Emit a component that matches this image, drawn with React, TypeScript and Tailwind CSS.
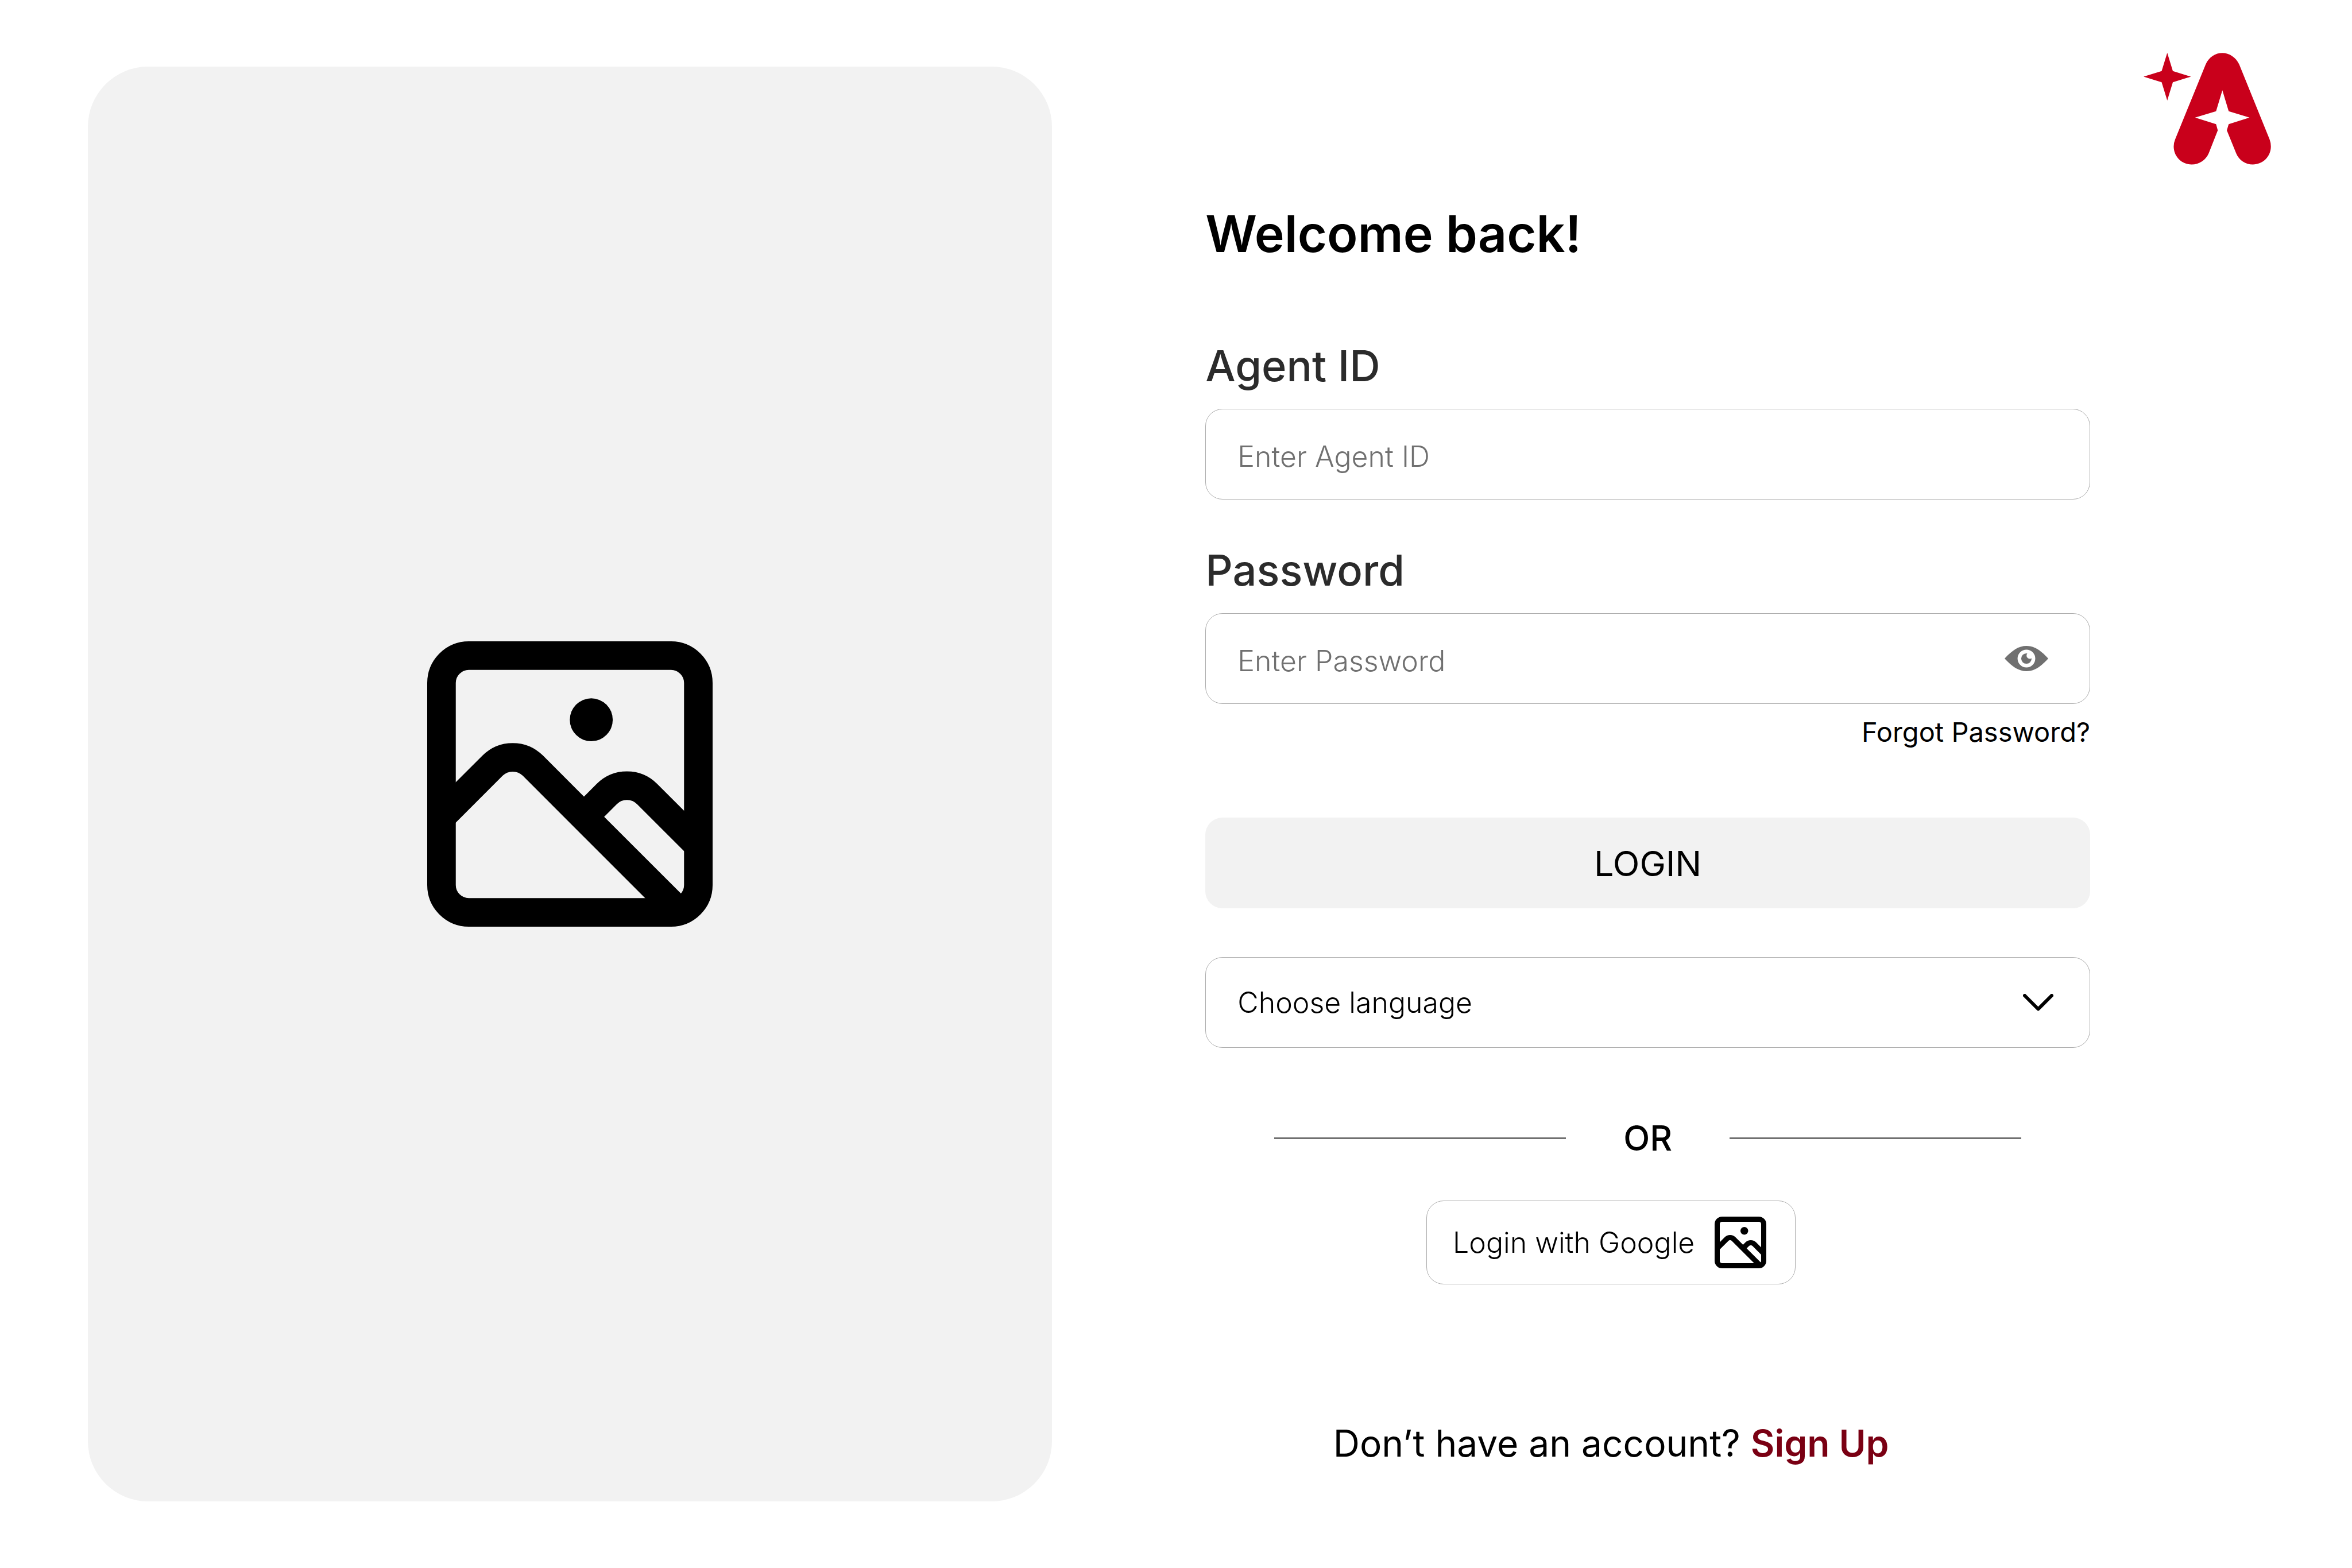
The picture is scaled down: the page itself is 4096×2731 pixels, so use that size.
import { useState } from "react";

function PictureIcon({ className }: { className: string }) {
  return (
    <svg className={className} viewBox="88 88 1389 1389" fill="none" stroke="currentColor" strokeWidth={139} aria-hidden="true">
      <rect x="157.5" y="157.5" width="1250" height="1250" rx="133" />
      <circle cx="886.5" cy="470" r="104.5" fill="currentColor" stroke="none" />
      <path d="M157 942 L406 693 A139 139 0 0 1 602 693 L1325 1416" />
      <path d="M862 931 L962 831 A139 139 0 0 1 1158 831 L1400 1073" />
    </svg>
  );
}

function Logo({ className }: { className: string }) {
  return (
    <svg className={className} viewBox="112 100 888 780" fill="#c9001b" role="img" aria-label="Logo">
      <path d="M277 100 L316 227 L442 266 L316 305 L277 432 L238 305 L112 266 L238 227 Z" />
      <path d="M545 180 C567 130 612 101 661 101 C710 101 755 132 778 180 L990 703 Q999 727 999 752 C999 823 942 878 873 878 C822 878 776 848 757 800 L692 640 L705 597 L850 551 L705 507 L661 361 L617 507 L471 551 L617 597 L629 640 L566 800 C546 848 498 878 447 878 C378 878 322 823 322 752 Q322 727 332 703 Z" />
    </svg>
  );
}

function EyeIcon() {
  return (
    <svg className="h-11 w-[76px]" viewBox="0 0 102 59" aria-hidden="true">
      <path fill="#707070" d="M0 29.5 C18 10 33 0 51 0 S84 10 102 29.5 C84 49 69 59 51 59 S18 49 0 29.5 Z" />
      <circle cx="51" cy="29.5" r="20.7" fill="#fff" />
      <circle cx="51" cy="29.5" r="12.2" fill="#707070" />
      <circle cx="59" cy="22.5" r="7.7" fill="#fff" />
    </svg>
  );
}

const field =
  "h-[158px] w-full rounded-[30px] border border-[#acacac] bg-white px-[55px] text-[50px] font-light outline-none";
const label = "mb-[30px] block text-[74px] leading-[90px] font-medium text-[#2b2b2b]";

export default function App() {
  const [shown, setShown] = useState(false);

  return (
    <main className="flex min-h-screen items-stretch bg-white font-['Inter','Liberation_Sans',sans-serif] text-black">
      <aside className="my-[116px] ml-[153px] flex w-[41%] shrink-0 items-center justify-center rounded-[105px] bg-[#f2f2f2]">
        <PictureIcon className="size-[497px]" />
      </aside>

      <form className="ml-[267px] min-w-0 flex-1 pt-[347px]" onSubmit={(e) => e.preventDefault()}>
        <h1 className="mb-[125px] text-[88px] leading-[120px] font-semibold">Welcome back!</h1>

        <label htmlFor="agent" className={label}>Agent ID</label>
        <input id="agent" type="text" placeholder="Enter Agent ID" className={`${field} mb-[78px] pt-2 placeholder:text-[#707070]`} />

        <label htmlFor="password" className={label}>Password</label>
        <div className="relative">
          <input
            id="password"
            type={shown ? "text" : "password"}
            placeholder="Enter Password"
            className={`${field} block pt-2 placeholder:text-[#707070]`}
          />
          <button
            type="button"
            aria-label="Show password"
            onClick={() => setShown(!shown)}
            className="absolute inset-y-0 right-[73px] flex items-center"
          >
            <EyeIcon />
          </button>
        </div>
        <div className="mt-[19px] mb-[119px] flex justify-end text-[47px] leading-[60px]">
          <a href="#forgot">Forgot Password?</a>
        </div>

        <button type="submit" className="block h-[158px] w-full rounded-[30px] bg-[#f2f2f2] pt-1 text-[61px]">
          LOGIN
        </button>

        <div className="relative mt-[85px]">
          <select aria-label="Choose language" defaultValue="" className={`${field} block appearance-none`}>
            <option value="">Choose language</option>
            <option value="en">English</option>
          </select>
          <svg
            className="pointer-events-none absolute inset-y-0 right-[64px] my-auto h-[30px] w-[53px]"
            viewBox="0 0 53 30"
            fill="none"
            stroke="currentColor"
            strokeWidth={6}
            strokeLinecap="round"
            strokeLinejoin="round"
            aria-hidden="true"
          >
            <path d="M3 3 L26.5 26.5 L50 3" />
          </svg>
        </div>

        <div className="mt-[121px] flex items-center gap-[100px] px-[120px]">
          <span className="h-[3px] flex-1 bg-[#707070]" />
          <span className="text-[60px] leading-[72px] font-medium">OR</span>
          <span className="h-[3px] flex-1 bg-[#707070]" />
        </div>

        <div className="mt-[73px] mr-[128px] flex flex-col items-center">
          <button
            type="button"
            className="flex h-[146px] items-center gap-[35px] rounded-[30px] border border-[#acacac] pr-[50px] pl-[45px] text-[50px] font-light whitespace-nowrap"
          >
            Login with Google
            <PictureIcon className="size-[90px]" />
          </button>
          <p className="mt-[237px] text-[64px] leading-[80px] whitespace-nowrap">
            Don’t have an account?{" "}
            <a href="#signup" className="font-semibold text-[#7a0013]">Sign Up</a>
          </p>
        </div>
      </form>

      <Logo className="mt-[92px] mr-[141px] ml-[93px] h-[195px] w-[222px] shrink-0" />
    </main>
  );
}
